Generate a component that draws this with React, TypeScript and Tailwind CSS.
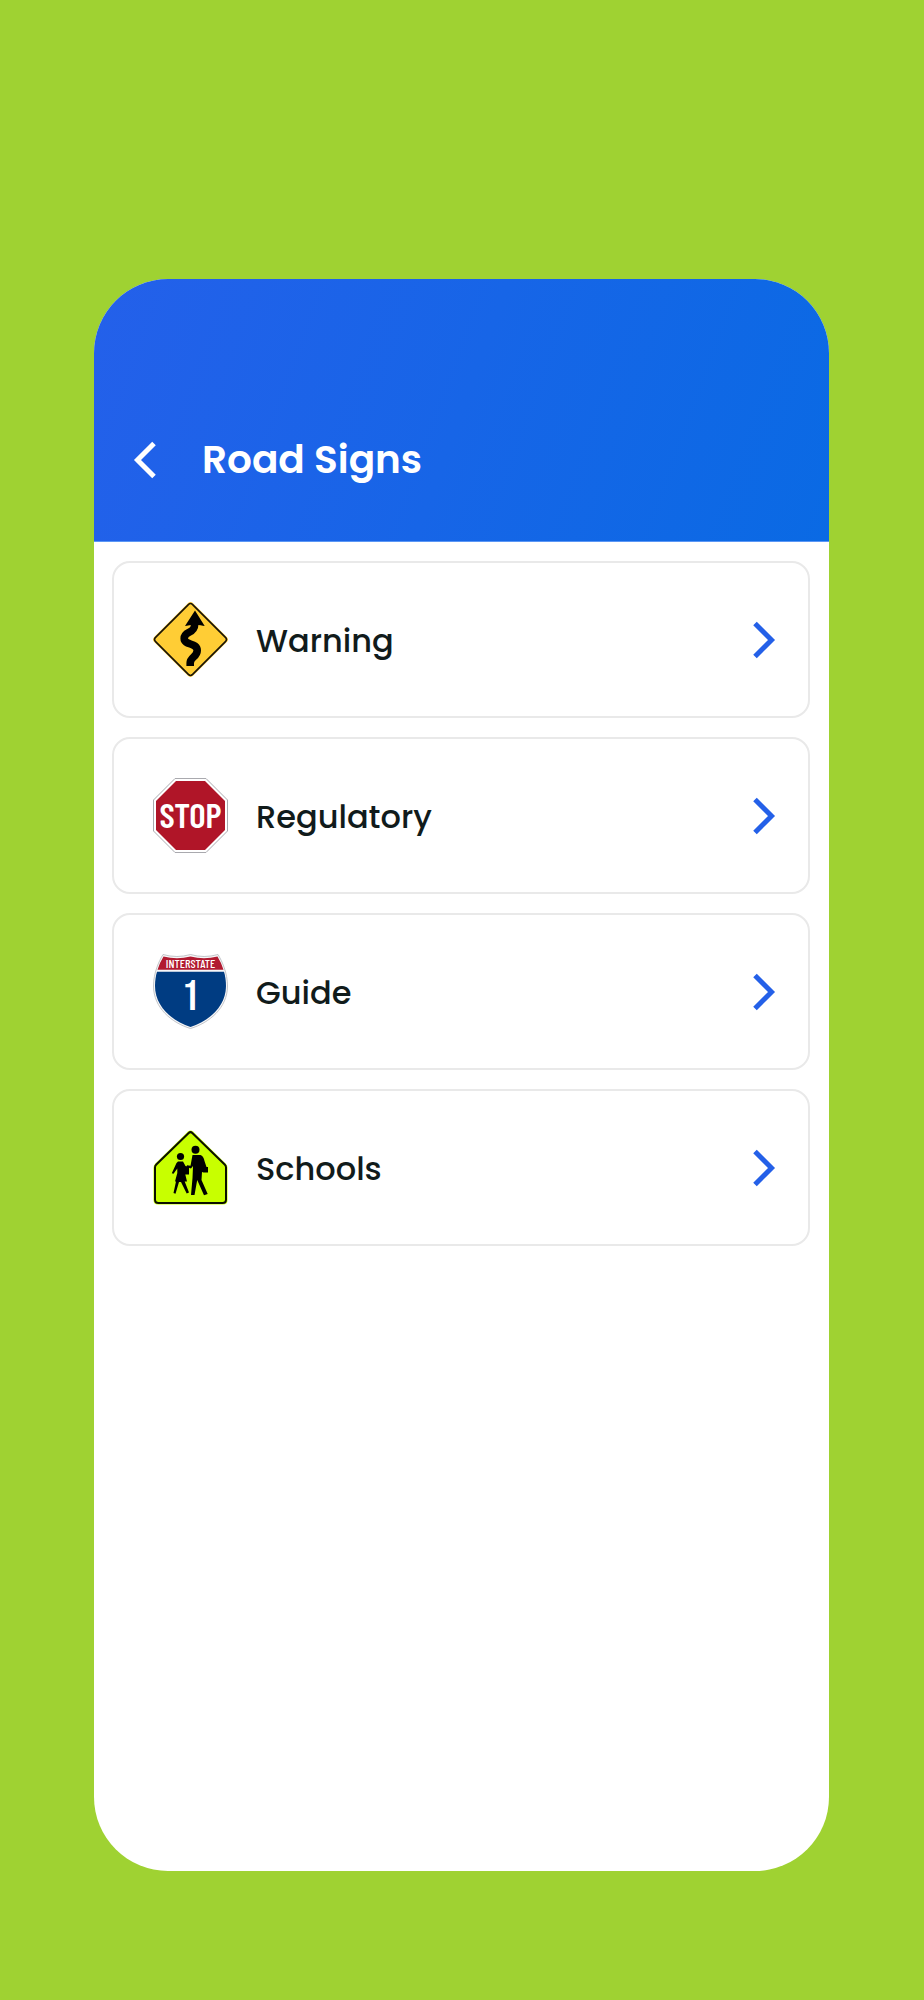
import type { ReactNode } from 'react';

interface SignCategory {
    id: string;
    label: string;
    icon: ReactNode;
}

// Narrow faces used for the lettering on the signs
const SIGN_FONT = "'Barlow Condensed', 'Roboto Condensed', 'Liberation Sans', sans-serif";
const NUMERAL_FONT = "'Bebas Neue', 'Roboto Condensed', 'Liberation Sans', sans-serif";

function WarningSign() {
    return (
        <svg viewBox="0 0 75 75" className="w-[75px] h-[75px] shrink-0" aria-hidden="true">
            <g transform="rotate(45 37.5 37.5)">
                <rect x="10" y="10" width="55" height="55" rx="4" fill="#ffcd35" />
                <rect x="11.3" y="11.3" width="52.4" height="52.4" rx="3" fill="none" stroke="#17130a" strokeWidth="1.6" />
            </g>
            <path
                d="M37.2 64V61C37.2 55 44.2 55 44.2 48.5C44.2 40.5 31.2 43.5 31.2 36.5C31.2 28.5 41.7 32.5 41.7 22"
                fill="none"
                stroke="#000"
                strokeWidth="7.6"
            />
            <path d="M42 8.5L51.7 24C48 22.5 36 22.5 32 24Z" fill="#000" />
        </svg>
    );
}

function StopSign() {
    return (
        <svg viewBox="0 0 75 75" className="w-[75px] h-[75px] shrink-0" aria-hidden="true">
            <path d="M22 .5H53L74.5 22V53L53 74.5H22L.5 53V22Z" fill="#fff" stroke="#a9a9ae" strokeWidth="1" />
            <path d="M23 3H52L72 23V52L52 72H23L3 52V23Z" fill="#b01528" />
            <text x="37.5" y="50" textAnchor="middle" fill="#fff" fontSize="35" fontWeight="600" fontFamily={SIGN_FONT}>
                STOP
            </text>
        </svg>
    );
}

function InterstateSign() {
    return (
        <svg viewBox="0 0 75 75" className="w-[75px] h-[75px] shrink-0" aria-hidden="true">
            <path
                d="M10 .5Q24 4.5 37.5 .5Q51 4.5 65 .5C69 7 74.5 19 74.5 32C74.5 54 56 69 37.5 74.5C19 69 .5 54 .5 32C.5 19 6 7 10 .5Z"
                fill="#f7f7f8"
                stroke="#b4b6bb"
                strokeWidth=".8"
            />
            <path d="M10.5 2.5Q24 6 37.5 2.5Q51 6 64.5 2.5Q68.5 9 70.5 15.7H4.5Q6.5 9 10.5 2.5Z" fill="#b11a30" />
            <path d="M4 17.7H71C72.3 22 73 27 73 32C73 53 55 67.5 37.5 73C20 67.5 2 53 2 32C2 27 2.7 22 4 17.7Z" fill="#003c82" />
            <text x="37.5" y="14" textAnchor="middle" fill="#fff" fontSize="12" fontWeight="500" fontFamily={SIGN_FONT}>
                INTERSTATE
            </text>
            <text x="37.5" y="55.5" textAnchor="middle" fill="#fff" fontSize="42" fontFamily={NUMERAL_FONT}>
                1
            </text>
        </svg>
    );
}

function SchoolSign() {
    return (
        <svg viewBox="0 0 75 75" className="w-[75px] h-[75px] shrink-0" aria-hidden="true">
            <path
                d="M35 1.5Q37.5 -.5 40 1.5L73 34Q74.5 35.5 74.5 38V70Q74.5 74.5 70 74.5H5Q.5 74.5 .5 70V38Q.5 35.5 2 34Z"
                fill="#c8ff00"
            />
            <path
                d="M35.7 3Q37.5 1.3 39.3 3L71.7 34.5Q73 35.8 73 37.5V69.5Q73 73 69.5 73H5.5Q2 73 2 69.5V37.5Q2 35.8 3.3 34.5Z"
                fill="none"
                stroke="#0b0f00"
                strokeWidth="2"
            />
            {/* Child */}
            <circle cx="27.5" cy="26.5" r="3.6" />
            <path d="M25 31.5H30L32.5 36L36 37V44.5H32.3L34 51.5H31.7L36 62.5L33.7 63.5L28 52H26L22.5 63.7L20.5 63L23 51.5H22L24.3 43V38.5L20.5 43.8L18.8 43.2L23.5 33Z" />
            {/* Adult */}
            <circle cx="42.5" cy="19.7" r="4" />
            <path d="M39.5 25H47.5Q50.5 26 51.5 31L53.5 37H55V42.5H50.5L49 42L48.5 50L54.7 64L51 65.3L44.2 50L41.5 65H38L39.5 48L40 36L38 38.5L33.5 37L34 35.2L37.5 35.8Z" />
        </svg>
    );
}

const CATEGORIES: SignCategory[] = [
    { id: 'warning', label: 'Warning', icon: <WarningSign /> },
    { id: 'regulatory', label: 'Regulatory', icon: <StopSign /> },
    { id: 'guide', label: 'Guide', icon: <InterstateSign /> },
    { id: 'schools', label: 'Schools', icon: <SchoolSign /> },
];

export default function App() {
    return (
        <div className="flex min-h-screen flex-col bg-[#9fd232] pt-[279px] pb-[129px] pl-[94px] pr-[95px] font-['Poppins',Inter,sans-serif]">
            <div className="flex grow flex-col overflow-hidden rounded-[74px] bg-white">
                {/* Header */}
                <header className="flex items-center gap-[45px] border-b border-[#5b97f5] bg-linear-[110deg] from-[#2460ea] to-[#0a6ae4] pt-[150px] pb-[50px] pl-[39px] pr-10">
                    <button type="button" aria-label="Back" className="text-white">
                        <svg viewBox="0 0 24 38" className="h-[38px] w-6" fill="none" stroke="currentColor" strokeWidth="5">
                            <path d="M21 2.5L4.5 19L21 35.5" />
                        </svg>
                    </button>
                    <h1 className="text-[39px] leading-[62px] font-semibold text-white">Road Signs</h1>
                </header>

                {/* Categories */}
                <main className="pt-[19px] pb-5 pl-[18px] pr-[19px]">
                    <ul className="flex flex-col gap-[19px]">
                        {CATEGORIES.map((category) => (
                            <li key={category.id}>
                                <button
                                    type="button"
                                    className="flex h-[157px] w-full items-center gap-7 rounded-[18px] border-2 border-[#e9e9e9] bg-white pl-[39px] pr-8 text-left"
                                >
                                    {category.icon}
                                    <span className="grow pt-[3px] text-[32px] leading-10 font-medium text-[#111b1b]">
                                        {category.label}
                                    </span>
                                    <svg
                                        viewBox="0 0 24 38"
                                        className="h-[38px] w-6 shrink-0 text-[#2460e8]"
                                        fill="none"
                                        stroke="currentColor"
                                        strokeWidth="5"
                                        aria-hidden="true"
                                    >
                                        <path d="M3 2.5L19.5 19L3 35.5" />
                                    </svg>
                                </button>
                            </li>
                        ))}
                    </ul>
                </main>
            </div>
        </div>
    );
}
